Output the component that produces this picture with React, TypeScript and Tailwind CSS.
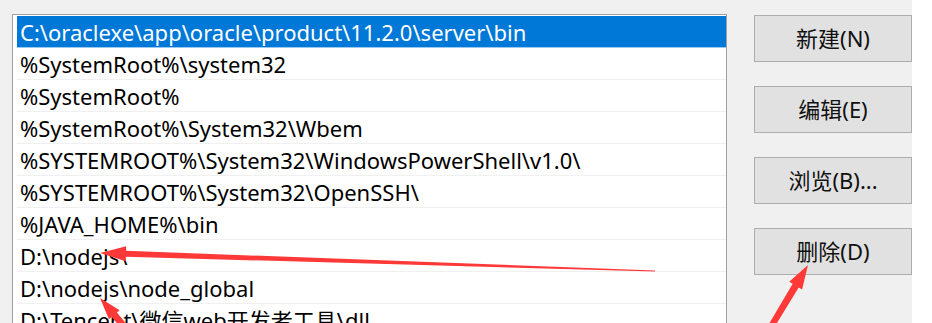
import React from 'react';

const paths = [
  'C:\\oraclexe\\app\\oracle\\product\\11.2.0\\server\\bin',
  '%SystemRoot%\\system32',
  '%SystemRoot%',
  '%SystemRoot%\\System32\\Wbem',
  '%SYSTEMROOT%\\System32\\WindowsPowerShell\\v1.0\\',
  '%SYSTEMROOT%\\System32\\OpenSSH\\',
  '%JAVA_HOME%\\bin',
  'D:\\nodejs\\',
  'D:\\nodejs\\node_global',
  'D:\\Tencent\\微信web开发者工具\\dll',
];

const buttons = ['新建(N)', '编辑(E)', '浏览(B)...', '删除(D)'];

// tapered arrow: wide head at tip, shaft thinning toward tail
function arrowPoints(tip: [number, number], tail: [number, number], headLen: number, headW: number, w0: number, w1: number) {
  const [tx, ty] = tip;
  const dx = tail[0] - tx;
  const dy = tail[1] - ty;
  const len = Math.hypot(dx, dy);
  const ux = dx / len;
  const uy = dy / len;
  const nx = -uy;
  const ny = ux;
  const bx = tx + ux * headLen;
  const by = ty + uy * headLen;
  const pts = [
    [tx, ty],
    [bx + nx * headW / 2, by + ny * headW / 2],
    [bx + nx * w0 / 2, by + ny * w0 / 2],
    [tail[0] + nx * w1 / 2, tail[1] + ny * w1 / 2],
    [tail[0] - nx * w1 / 2, tail[1] - ny * w1 / 2],
    [bx - nx * w0 / 2, by - ny * w0 / 2],
    [bx - nx * headW / 2, by - ny * headW / 2],
  ];
  return pts.map((p) => p.map((v) => v.toFixed(1)).join(',')).join(' ');
}

const App: React.FC = () => {
  return (
    <div
      className="relative w-[932px] h-[323px] overflow-hidden bg-white flex"
      style={{ fontFamily: '"Noto Sans", "Noto Sans CJK SC", sans-serif' }}
    >
      <div className="w-[912px] h-full bg-[#f0f0f0] flex items-start pl-[12px] pt-[14px]">
        {/* path list */}
        <div className="w-[715px] h-[330px] bg-white border border-[#a0a0a0] pl-[4px] pt-[1px]">
          {paths.map((p, i) => (
            <div
              key={p}
              className={
                i === 0
                  ? 'h-[32px] flex items-center pl-[3px] bg-[#0078d7] text-white border-b border-[#99c9ef] text-[22px] leading-none whitespace-nowrap'
                  : 'h-[32px] flex items-center pl-[3px] text-black border-b border-[#f0f0f0] text-[22px] leading-none whitespace-nowrap'
              }
            >
              {p}
            </div>
          ))}
        </div>

        {/* buttons */}
        <div className="ml-[27px] mt-[1px] flex flex-col gap-[24px] w-[158px]">
          {buttons.map((b) => (
            <button
              key={b}
              className="h-[47px] bg-[#e1e1e1] border border-[#adadad] text-[22px] text-[#111] flex items-center justify-center"
            >
              {b}
            </button>
          ))}
        </div>
      </div>

      {/* annotation arrows */}
      <svg className="absolute inset-0 pointer-events-none" width="932" height="323" viewBox="0 0 932 323">
        <polygon points={arrowPoints([100, 253], [655, 271], 26, 15, 6, 1)} fill="#ff3838" />
        <polygon points={arrowPoints([100, 298], [140, 345], 22, 14, 7, 6)} fill="#ff3838" />
        <polygon points={arrowPoints([808, 265], [760, 345], 24, 15, 7, 6)} fill="#ff3838" />
      </svg>
    </div>
  );
};

export default App;
